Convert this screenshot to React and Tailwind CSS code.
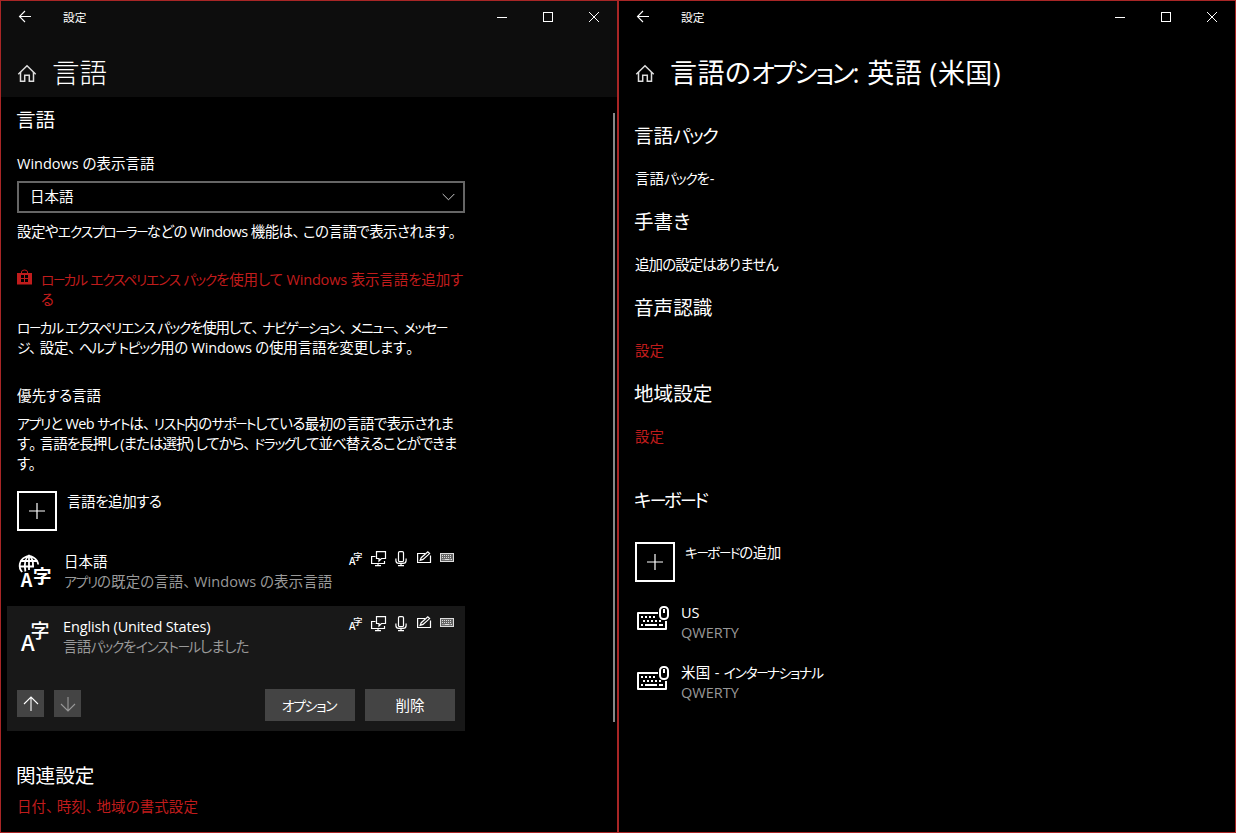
// UI text is set with narrow katakana, so those runs are a bit smaller and tighter
function Jp({ children }) {
  return children.split(/(ー|[ァ-ヺ]+|[、。])/).map((part, i) => {
    if (part === "ー") return <span key={i} className="text-[0.86em] leading-none tracking-[-0.15em]">{part}</span>;
    if (/^[ァ-ヺ]/.test(part)) return <span key={i} className="text-[0.95em] leading-none tracking-[-0.09em]">{part}</span>;
    if (/^[、。]/.test(part)) return <span key={i} className="tracking-[0.23em]">{part}</span>;
    return part;
  });
}

function TranslateIcon() {
  return (
    <svg width="34" height="34" viewBox="0 0 34 34" fill="#fff" className="overflow-visible font-['Noto_Sans_CJK_JP',sans-serif] font-medium">
      <text x="4" y="30.3" fontSize="22">A</text>
      <text x="13.5" y="17.2" fontSize="19">字</text>
    </svg>
  );
}

function SmallTranslateIcon() {
  return (
    <svg width="16" height="16" viewBox="0 0 16 16" fill="#fff" className="overflow-visible font-['Noto_Sans_CJK_JP',sans-serif] font-medium">
      <text x="1" y="14.3" fontSize="10.5">A</text>
      <text x="5.2" y="8.7" fontSize="9.2">字</text>
    </svg>
  );
}

function GlobeTranslateIcon() {
  return (
    <svg width="34" height="34" viewBox="0 0 34 34" className="overflow-visible font-['Noto_Sans_CJK_JP',sans-serif] font-bold">
      <g fill="none" stroke="#fff" strokeWidth="1.8">
        <path d="M5.2 18A9.3 9.3 0 1 1 21.2 10.5" />
        <path d="M8.4 17.5C7 10 8.5 4 12 1.5C15.5 4 16.4 8 16 13" />
        <path d="M3.6 7H20.4M2.8 12.5H17M12 1.5V16" />
      </g>
      <g fill="#fff">
        <text x="3.8" y="32.8" fontSize="18">A</text>
        <text x="16" y="28.5" fontSize="18.5">字</text>
      </g>
    </svg>
  );
}

function FeatureIcons() {
  return (
    <div className="flex gap-[7px]">
      <SmallTranslateIcon />
      <svg width="16" height="16" viewBox="0 0 16 16" fill="none" stroke="#fff" strokeWidth="1.2">
        <path d="M4.5 5.5H.6V12.5H13.5V10M7 12.5V14.5M4 14.6H10" />
        <path d="M5.5.6H14.5V7.5H10.5L8 10V7.5H5.5Z" />
      </svg>
      <svg width="16" height="16" viewBox="0 0 16 16" fill="none" stroke="#fff" strokeWidth="1.2">
        <rect x="4.5" y=".6" width="5" height="10" rx="1.2" />
        <path d="M1.9 7.5V9.5Q1.9 12.4 5 12.4H9Q12.1 12.4 12.1 9.5V7.5M7 12.4V14.6M4 14.6H10" />
      </svg>
      <svg width="16" height="16" viewBox="0 0 16 16" fill="none" stroke="#fff" strokeWidth="1.2">
        <path d="M8 2.5H.6V11.5H13.5V4.5" />
        <path d="M3.2 9.3L4.2 6.7L10.8.9L12.6 2.6L6 8.4Z" />
      </svg>
      <svg width="16" height="16" viewBox="0 0 16 16" fill="none" stroke="#ddd">
        <rect x=".5" y="2.5" width="13" height="8" fill="#666" />
        <path d="M2 4.5H12M2 6.5H12" strokeDasharray="1 1" />
        <path d="M2.5 8.5H3.5M4.5 8.5H9.5M10.5 8.5H12" />
      </svg>
    </div>
  );
}

function KeyboardIcon() {
  return (
    <svg width="34" height="26" viewBox="0 0 34 26" fill="none" stroke="#fff" strokeWidth="2">
      <path d="M23 7H3V23H31V15" strokeLinejoin="round" />
      <path d="M6 11H22M8 15H28" strokeDasharray="2 2" />
      <path d="M6 19H8M10 19H22M24 19H28" />
      <rect x="25" y="1" width="8" height="12" rx="3.5" />
      <path d="M29 3V7" />
    </svg>
  );
}

function HomeIcon() {
  return (
    <svg width="20" height="20" viewBox="0 0 20 20" fill="none" stroke="#ddd" strokeWidth="1.5">
      <path d="M1.3 11.2L10 2.8L18.7 11.2" />
      <path d="M3.5 9V18.2H7.7V12.2H12.3V18.2H16.5V9" />
    </svg>
  );
}

function StoreIcon() {
  return (
    <svg width="16" height="17" viewBox="0 0 16 17" className="-mt-px shrink-0">
      <path d="M4.5 5V3Q4.5 1 7.5 1T10.5 3V5" fill="none" stroke="#c01c1c" />
      <path d="M0 4H15V15.5H0Z" fill="#c01c1c" />
      <path d="M4 6H7V9H4ZM8 6H11V9H8ZM4 10H7V13H4ZM8 10H11V13H8Z" fill="#000" />
    </svg>
  );
}

function TitleBar() {
  return (
    <div className="flex h-8 items-center pl-[17px] text-[11.7px]">
      <svg width="14" height="14" viewBox="0 0 14 14" fill="none" stroke="#fff" strokeWidth="1.1">
        <path d="M13 6.5H1.5M7 1L1.5 6.5L7 12" />
      </svg>
      <span className="ml-[31px]">設定</span>
      <div className="ml-auto mr-[17px] flex gap-[34px]">
        <svg width="12" height="12" viewBox="0 0 12 12" stroke="#fff">
          <path d="M1 6.5H11" />
        </svg>
        <svg width="12" height="12" viewBox="0 0 12 12" fill="none" stroke="#fff">
          <rect x="1.5" y="1.5" width="9" height="9" />
        </svg>
        <svg width="12" height="12" viewBox="0 0 12 12" stroke="#fff">
          <path d="M1 1L11 11M11 1L1 11" />
        </svg>
      </div>
    </div>
  );
}

function Heading({ className = "", children }) {
  return (
    <h2 className={`-ml-px h-6 text-[19.6px] leading-6 ${className}`}>
      <Jp>{children}</Jp>
    </h2>
  );
}

function AddButton({ label }) {
  return (
    <div className="flex">
      <button className="flex size-10 items-center justify-center border-2 border-white">
        <svg width="16" height="16" viewBox="0 0 16 16" stroke="#fff" strokeWidth="1.2">
          <path d="M0 8H16M8 0V16" />
        </svg>
      </button>
      <span className="ml-2.5 mt-px tracking-[-0.03em]"><Jp>{label}</Jp></span>
    </div>
  );
}

function LanguageWindow() {
  return (
    <section className="flex w-[618px] flex-col border border-[#a82626]">
      <header className="h-24 bg-[#0d0d0d]">
        <TitleBar />
        <div className="mt-[22px] flex items-center pl-4">
          <HomeIcon />
          <h1 className="ml-[15px] h-9 text-[27.5px] font-extralight leading-9">言語</h1>
        </div>
      </header>
      <div className="flex flex-1">
        <main className="w-[464px] pl-4">
          <Heading className="mt-[11px]">言語</Heading>
          <p className="mt-[22px]">Windows の表示言語</p>
          <div className="mt-[7px] flex h-8 items-center justify-between border-2 border-[#666] pl-[11px] pr-2">
            <span>日本語</span>
            <svg width="13" height="8" viewBox="0 0 13 8" fill="none" stroke="#ccc">
              <path d="M.7 1L6.5 6.8L12.3 1" />
            </svg>
          </div>
          <p className="mt-[9px] tracking-[-0.04em]"><Jp>設定やエクスプローラーなどの Windows 機能は、この言語で表示されます。</Jp></p>
          <div className="mt-7 flex text-[#c01c1c]">
            <StoreIcon />
            <div className="ml-2">
              <p className="tracking-[-0.01em]"><Jp>ローカル エクスペリエンス パックを使用して Windows 表示言語を追加す</Jp></p>
              <p>る</p>
            </div>
          </div>
          <p className="mt-2 tracking-[-0.08em]"><Jp>ローカル エクスペリエンス パックを使用して、ナビゲーション、メニュー、メッセー</Jp></p>
          <p className="tracking-[-0.015em]"><Jp>ジ、設定、ヘルプ トピック用の Windows の使用言語を変更します。</Jp></p>
          <p className="mt-7">優先する言語</p>
          <p className="mt-2 tracking-[-0.04em]"><Jp>アプリと Web サイトは、リスト内のサポートしている最初の言語で表示されま</Jp></p>
          <p className="tracking-[-0.067em]"><Jp>す。言語を長押し (または選択) してから、ドラッグして並べ替えることができま</Jp></p>
          <p>す。</p>
          <div className="mt-[17px]">
            <AddButton label="言語を追加する" />
          </div>
          <div className="mt-5 flex h-[55px] pr-[9px]">
            <div className="mt-[3px]"><GlobeTranslateIcon /></div>
            <div className="ml-[13px] mt-px">
              <p>日本語</p>
              <p className="tracking-[0.005em] text-[#999]"><Jp>アプリの既定の言語、Windows の表示言語</Jp></p>
            </div>
            <div className="ml-auto"><FeatureIcons /></div>
          </div>
          <div className="-ml-2.5 h-[125px] w-[458px] bg-[#181818] pl-2.5 pr-2.5 pt-[11px]">
            <div className="-mr-px flex">
              <div className="mt-1"><TranslateIcon /></div>
              <div className="ml-3">
                <p className="tracking-[-0.01em]">English (United States)</p>
                <p className="tracking-[-0.05em] text-[#999]"><Jp>言語パックをインストールしました</Jp></p>
              </div>
              <div className="-mt-px ml-auto"><FeatureIcons /></div>
            </div>
            <div className="mt-8 flex items-start">
              <button className="mt-px flex size-[27px] items-center justify-center bg-[#444]">
                <svg width="16" height="16" viewBox="0 0 16 16" fill="none" stroke="#fff" strokeWidth="1.1">
                  <path d="M8 15V1M1 8L8 1L15 8" />
                </svg>
              </button>
              <button className="ml-2.5 mt-px flex size-[27px] items-center justify-center bg-[#444]">
                <svg width="16" height="16" viewBox="0 0 16 16" fill="none" stroke="#999" strokeWidth="1.1">
                  <path d="M8 1V15M1 8L8 15L15 8" />
                </svg>
              </button>
              <button className="ml-auto h-8 w-[90px] bg-[#444] pr-0.5 pt-px"><Jp>オプション</Jp></button>
              <button className="ml-2.5 h-8 w-[90px] bg-[#444] pt-px">削除</button>
            </div>
          </div>
          <Heading className="mt-[33px]">関連設定</Heading>
          <p className="mt-[9px] tracking-[0.005em] text-[#c01c1c]"><Jp>日付、時刻、地域の書式設定</Jp></p>
        </main>
        <div className="ml-auto mr-[2px] mt-4 h-[609px] w-[2px] bg-[#888]" />
      </div>
    </section>
  );
}

function OptionsWindow() {
  return (
    <section className="w-[618px] border border-[#a82626]">
      <TitleBar />
      <div className="mt-[22px] flex items-center pl-4">
        <HomeIcon />
        <h1 className="ml-[15px] h-9 text-[27px] leading-9 tracking-[0.015em]"><Jp>言語のオプション: 英語 (米国)</Jp></h1>
      </div>
      <main className="pl-4">
        <Heading className="mt-[33px]">言語パック</Heading>
        <p className="mt-[21px]"><Jp>言語パックを-</Jp></p>
        <Heading className="mt-[21px]">手書き</Heading>
        <p className="mt-[21px] tracking-[-0.065em]">追加の設定はありません</p>
        <Heading className="mt-[21px]">音声認識</Heading>
        <p className="mt-[21px] text-[#c01c1c]">設定</p>
        <Heading className="mt-[21px]">地域設定</Heading>
        <p className="mt-[21px] text-[#c01c1c]">設定</p>
        <Heading className="mt-[41px]">キーボード</Heading>
        <div className="mt-[30px]">
          <AddButton label="キーボードの追加" />
        </div>
        <div className="mt-[21px] flex">
          <div className="mt-[3px]"><KeyboardIcon /></div>
          <div className="ml-3">
            <p>US</p>
            <p className="text-[#999]">QWERTY</p>
          </div>
        </div>
        <div className="mt-5 flex">
          <div className="mt-[3px]"><KeyboardIcon /></div>
          <div className="ml-3">
            <p className="tracking-[0.02em]"><Jp>米国 - インターナショナル</Jp></p>
            <p className="text-[#999]">QWERTY</p>
          </div>
        </div>
      </main>
    </section>
  );
}

export default function App() {
  return (
    <div className="flex h-[833px] w-[1236px] overflow-hidden whitespace-nowrap bg-black font-['Open_Sans','Noto_Sans_CJK_JP',sans-serif] text-[14.5px] leading-5 text-white [font-feature-settings:'palt']">
      <LanguageWindow />
      <OptionsWindow />
    </div>
  );
}
